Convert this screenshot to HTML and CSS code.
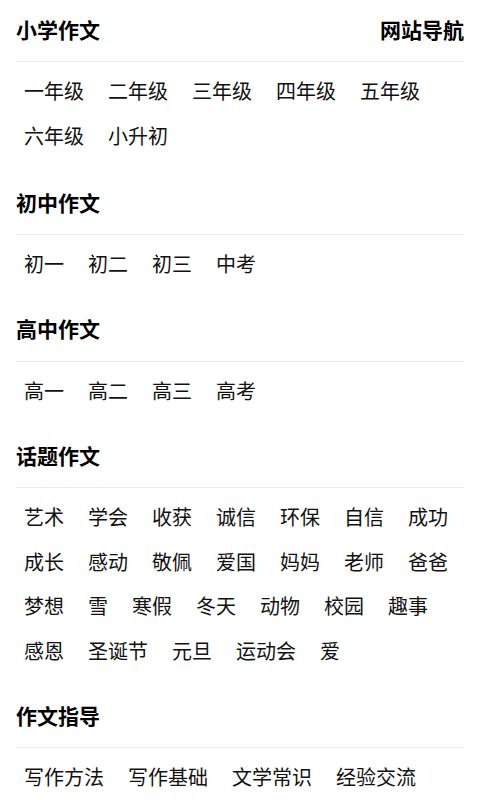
FILE: index.html
```html
<!DOCTYPE html>
<html lang="zh-CN">
<head>
    <meta charset="UTF-8">
    <meta name="viewport" content="width=device-width, initial-scale=1.0">
    <title>网站导航</title>
    <link rel="stylesheet" href="styles.css">
</head>
<body>
    <div class="nav">
        <div class="section">
            <div class="section-head">
                <h2>小学作文</h2>
                <span class="site-title">网站导航</span>
            </div>
            <ul class="links">
                <li><a href="#">一年级</a></li>
                <li><a href="#">二年级</a></li>
                <li><a href="#">三年级</a></li>
                <li><a href="#">四年级</a></li>
                <li><a href="#">五年级</a></li>
                <li><a href="#">六年级</a></li>
                <li><a href="#">小升初</a></li>
            </ul>
        </div>

        <div class="section">
            <div class="section-head">
                <h2>初中作文</h2>
            </div>
            <ul class="links">
                <li><a href="#">初一</a></li>
                <li><a href="#">初二</a></li>
                <li><a href="#">初三</a></li>
                <li><a href="#">中考</a></li>
            </ul>
        </div>

        <div class="section">
            <div class="section-head">
                <h2>高中作文</h2>
            </div>
            <ul class="links">
                <li><a href="#">高一</a></li>
                <li><a href="#">高二</a></li>
                <li><a href="#">高三</a></li>
                <li><a href="#">高考</a></li>
            </ul>
        </div>

        <div class="section">
            <div class="section-head">
                <h2>话题作文</h2>
            </div>
            <ul class="links">
                <li><a href="#">艺术</a></li>
                <li><a href="#">学会</a></li>
                <li><a href="#">收获</a></li>
                <li><a href="#">诚信</a></li>
                <li><a href="#">环保</a></li>
                <li><a href="#">自信</a></li>
                <li><a href="#">成功</a></li>
                <li><a href="#">成长</a></li>
                <li><a href="#">感动</a></li>
                <li><a href="#">敬佩</a></li>
                <li><a href="#">爱国</a></li>
                <li><a href="#">妈妈</a></li>
                <li><a href="#">老师</a></li>
                <li><a href="#">爸爸</a></li>
                <li><a href="#">梦想</a></li>
                <li><a href="#">雪</a></li>
                <li><a href="#">寒假</a></li>
                <li><a href="#">冬天</a></li>
                <li><a href="#">动物</a></li>
                <li><a href="#">校园</a></li>
                <li><a href="#">趣事</a></li>
                <li><a href="#">感恩</a></li>
                <li><a href="#">圣诞节</a></li>
                <li><a href="#">元旦</a></li>
                <li><a href="#">运动会</a></li>
                <li><a href="#">爱</a></li>
            </ul>
        </div>

        <div class="section">
            <div class="section-head">
                <h2>作文指导</h2>
            </div>
            <ul class="links">
                <li><a href="#">写作方法</a></li>
                <li><a href="#">写作基础</a></li>
                <li><a href="#">文学常识</a></li>
                <li><a href="#">经验交流</a></li>
            </ul>
        </div>
    </div>
</body>
</html>
```

FILE: styles.css
```css
* {
    box-sizing: border-box;
    margin: 0;
    padding: 0;
}

body {
    background: #fff;
    color: #111;
    font-family: 'Noto Sans CJK SC', 'Noto Sans', sans-serif;
}

.nav {
    padding: 0 16px;
}

.section-head {
    display: flex;
    justify-content: space-between;
    align-items: center;
    height: 62px;
    padding-bottom: 4px;
    border-bottom: 1px solid #ebebeb;
}

.section-head h2,
.site-title {
    font-size: 21px;
    line-height: 30px;
    font-weight: bold;
    color: #000;
}

.links {
    list-style: none;
    display: flex;
    flex-wrap: wrap;
    column-gap: 24px;
    padding: 7px 0 13px 8px;
}

.section:first-child .links {
    padding-bottom: 15px;
}

.links li {
    height: 44.5px;
}

.links a {
    display: block;
    font-size: 20px;
    line-height: 44px;
    color: #111;
    text-decoration: none;
}
```
